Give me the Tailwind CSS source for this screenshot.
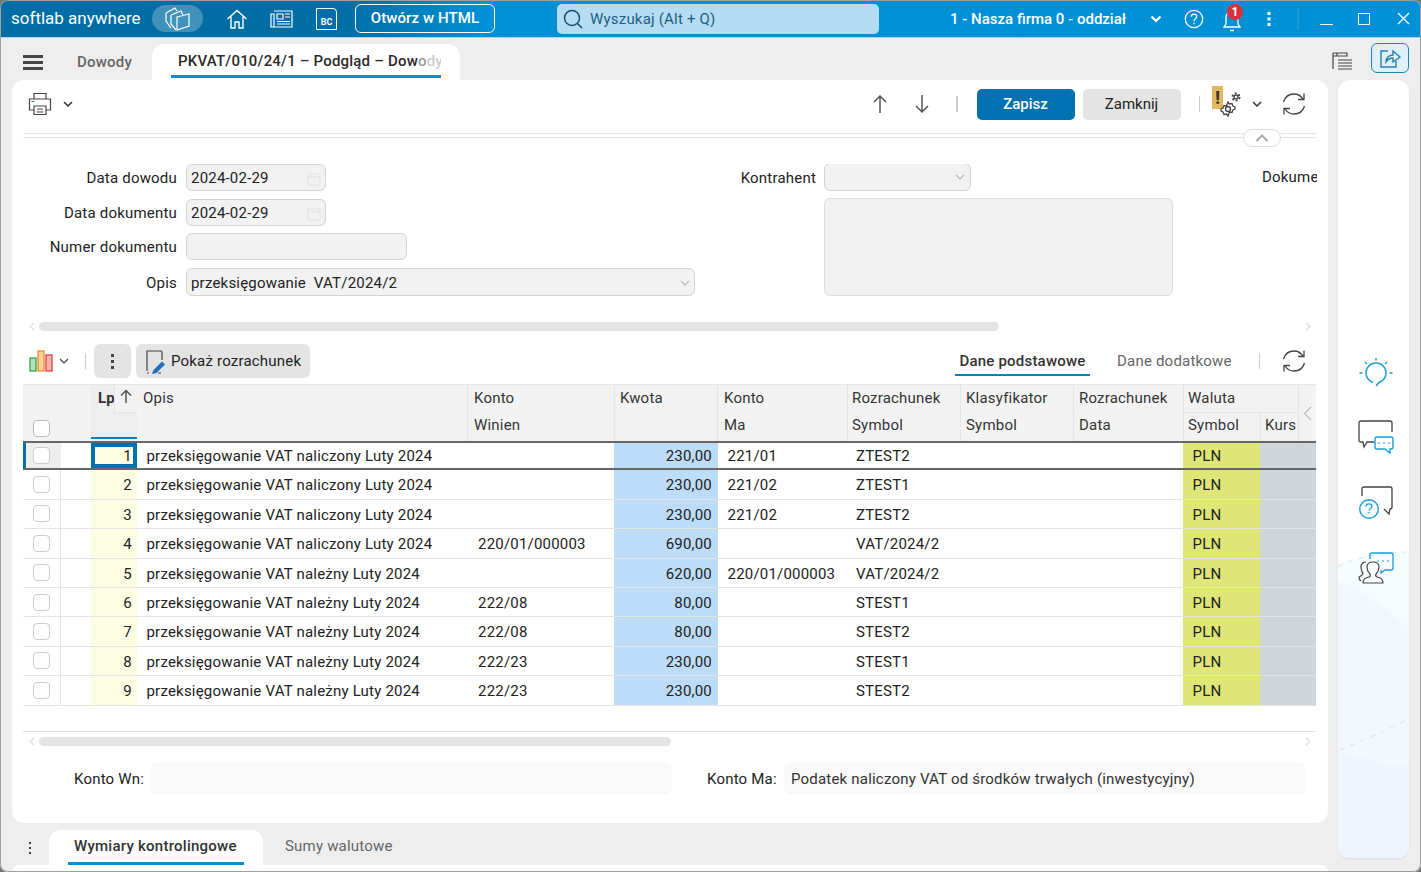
<!DOCTYPE html>
<html lang="pl">
<head>
<meta charset="UTF-8">
<title>PKVAT/010/24/1 - Podgląd - Dowody</title>
<script src="https://cdn.jsdelivr.net/npm/@tailwindcss/browser@4"></script>
</head>
<body class="w-[1421px] h-[872px] overflow-hidden bg-[#777] font-['Roboto',sans-serif] text-[15px] text-[#222]">
<div class="relative w-[1421px] h-[872px] overflow-hidden rounded-[8px] bg-[#eeeeee]">

<!-- title bar -->
<header class="h-[38px] flex items-center text-white bg-gradient-to-r from-[#006ea4] from-[24%] to-[#0090d6] to-[34%] border-b border-[#a9d3ea]">
  <span class="ml-[11px] w-[141px] pt-[1px] text-[17px] whitespace-nowrap">softlab anywhere</span>
  <div class="w-[51px] h-[27px] rounded-full bg-white/25 flex items-center justify-center">
    <svg width="25" height="25" viewBox="0 0 25 25" fill="none" stroke="#fff" stroke-width="1.200"><path d="M12 11L24 8V20L12 24Z"/><path d="M6 9L16 5L18 9M6 9V18L11 24"/><path d="M1 7L10 2L12 5M1 7V15L6 22"/></svg>
  </div>
  <svg class="ml-[23px]" width="22" height="22" viewBox="0 0 22 22" fill="none" stroke="#fff" stroke-width="1.400"><path d="M1.500 11L11 2.500 20.500 11M5 8.500V20h4v-6h4v6h4V8.500"/></svg>
  <svg class="ml-[21px]" width="24" height="20" viewBox="0 0 24 20" fill="none" stroke="#fff" stroke-width="1.200"><path d="M5 2h18v16H2V5h3v13M8 5h6v5H8zM16 5h5M16 8h5M8 12.500h13M8 15h13"/></svg>
  <div class="ml-[23px] w-[21px] h-[22px] border border-white rounded-tr-[4px] rounded-bl-[1px] flex items-end justify-center text-[9px] font-bold leading-[13px]">BC</div>
  <button class="ml-[18px] w-[140px] h-[29px] border border-white rounded-[6px] text-[15px] tracking-[0.1px] font-medium">Otwórz w HTML</button>
  <div class="ml-[62px] w-[322px] h-[30px] pt-[1px] rounded-[5px] bg-[#b5dcf2] flex items-center text-[#1d5f86] text-[15px] tracking-[0.2px]">
    <svg class="ml-[5px] mr-[6px]" width="22" height="22" viewBox="0 0 22 22" fill="none" stroke="#174f70" stroke-width="1.500"><circle cx="10" cy="10" r="7.500"/><path d="M15.500 15.500L20 20"/></svg>
    Wyszukaj (Alt + Q)
  </div>
  <span class="ml-[71px] w-[200px] pt-[1px] whitespace-nowrap text-[15px] font-medium">1 - Nasza firma 0 - oddział</span>
  <svg width="12" height="8" viewBox="0 0 12 8" fill="none" stroke="#fff" stroke-width="2.200"><path d="M1.500 1.500L6 6l4.500-4.500"/></svg>
  <svg class="ml-[22px]" width="20" height="20" viewBox="0 0 20 20" fill="none" stroke="#fff" stroke-width="1.300"><circle cx="10" cy="10" r="8.700"/><path d="M7.300 7.800c0-3.400 5.500-3.400 5.500-.2 0 2.200-2.800 2.200-2.800 4.600M10 13.800v1.400"/></svg>
  <div class="relative ml-[18px] w-[20px] h-[26px]">
    <svg width="20" height="26" viewBox="0 0 20 26" fill="none" stroke="#fff" stroke-width="1.300"><path d="M2 21h16l-2-3V12c0-4-2.500-6.500-6-6.500S4 8 4 12v6zM8 24.500h4"/></svg>
    <span class="absolute -top-[2px] left-[5px] w-[16px] h-[16px] rounded-full bg-[#d8313b] text-[12px] font-bold leading-[16px] text-center">1</span>
  </div>
  <svg class="ml-[25px]" width="4" height="14" viewBox="0 0 4 14" fill="#fff"><rect x="0.500" width="3" height="3"/><rect x="0.500" y="5.500" width="3" height="3"/><rect x="0.500" y="11" width="3" height="3"/></svg>
  <div class="ml-[26px] w-[2px] h-[22px] bg-white/10"></div>
  <div class="ml-[21px] w-[13px] h-[1.500px] bg-white mt-[12px]"></div>
  <div class="ml-[25px] w-[12px] h-[12px] border-[1.500px] border-white"></div>
  <svg class="ml-[27px]" width="13" height="13" viewBox="0 0 13 13" stroke="#fff" stroke-width="1.400"><path d="M1 1l11 11M12 1L1 12"/></svg>
</header>

<!-- tab strip -->
<div class="h-[42px] flex items-end">
  <div class="w-[152px] h-[36px] flex items-center shrink-0">
    <div class="ml-[23px] w-[20px] flex flex-col gap-[3px]"><i class="block h-[3px] bg-[#444]"></i><i class="block h-[3px] bg-[#444]"></i><i class="block h-[3px] bg-[#444]"></i></div>
    <span class="ml-[34px] font-medium text-[#666] text-[15px] tracking-[0.2px]">Dowody</span>
  </div>
  <div class="w-[308px] h-[36px] bg-white rounded-t-[12px] px-[19px] flex flex-col">
    <div class="h-[31px] pl-[7px] leading-[35px] text-[15px] tracking-[0.2px] font-medium text-[#2a2a2a] whitespace-nowrap overflow-hidden">PKVAT/010/24/1 – Podgląd – Dow<span class="text-[#999]">o</span><span class="text-[#ccc]">dy</span></div>
    <div class="h-[3px] bg-[#0a8fd6]"></div>
  </div>
  <div class="ml-[870px] mb-[9px] w-[24px] flex justify-center">
    <svg width="22" height="20" viewBox="0 0 22 20" fill="none" stroke="#444"><path d="M2 18V2M2 2h4v3H2M6 2h10v3H6M7 9h14M7 12h14M7 15h14M7 18h14" stroke-width="1.200"/></svg>
  </div>
  <div class="ml-[17px] mb-[7px] w-[38px] h-[30px] rounded-[6px] border border-[#1d85b8] bg-[#dff0f9] flex items-center justify-center">
    <svg width="22" height="22" viewBox="0 0 22 22" fill="none" stroke="#2a7fb0" stroke-width="1.400"><path d="M9 4H2v16h15v-6M7 15c0-5 4-7 7-7V4l7 6-7 5v-4c-3 0-5 1-7 4z"/></svg>
  </div>
</div>

<div class="flex h-[792px]">
  <div class="ml-[12px] w-[1316px] shrink-0 flex flex-col">

    <!-- main card -->
    <main class="h-[743px] shrink-0 bg-white rounded-[12px] flex flex-col">

      <!-- toolbar -->
      <div class="h-[53px] shrink-0 flex items-center pb-[5px]">
        <svg class="ml-[16px]" width="24" height="24" viewBox="0 0 24 24" fill="none" stroke="#444" stroke-width="1.200"><path d="M6 7V1.500h12V7M6 18H1.500V7h21v11H18M6 14h12v8.500H6zM9 17h6M9 20h6"/><path d="M3.500 9.500h3" stroke="#1d85c8"/></svg>
        <svg class="ml-[11px]" width="10" height="6" viewBox="0 0 10 6" fill="none" stroke="#333" stroke-width="1.500"><path d="M1 1l4 4 4-4"/></svg>
        <svg class="ml-[799px]" width="16" height="20" viewBox="0 0 16 20" fill="none" stroke="#555" stroke-width="1.500"><path d="M8 19V2M2 8l6-6 6 6"/></svg>
        <svg class="ml-[26px]" width="16" height="20" viewBox="0 0 16 20" fill="none" stroke="#555" stroke-width="1.500"><path d="M8 1v17M2 12l6 6 6-6"/></svg>
        <div class="ml-[26px] w-[1.500px] h-[16px] bg-[#ccc]"></div>
        <button class="ml-[19px] w-[98px] h-[31px] pt-[1px] rounded-[5px] bg-[#0071b0] text-white font-medium text-[15px]">Zapisz</button>
        <button class="ml-[8px] w-[98px] h-[31px] pt-[1px] rounded-[5px] bg-[#e4e4e4] text-[15px] text-[#222]">Zamknij</button>
        <div class="ml-[18px] w-[1.500px] h-[16px] bg-[#ccc]"></div>
        <div class="relative ml-[12px] w-[30px] h-[30px]">
          <div class="absolute left-0 top-[-3px] w-[11px] h-[23px] bg-[#e2b95c] text-[#333] font-bold text-[19px] leading-[23px] text-center">!</div>
          <svg class="absolute left-[8px] top-[2px]" width="22" height="28" viewBox="0 0 22 28" fill="none" stroke="#444" stroke-width="1.300"><circle cx="8" cy="18" r="2.500"/><path d="M8 11l1.500 2 2.500-.5 1 2.500 2 1v2l-2 1-1 2.500-2.500-.5L8 25l-1.500-2-2.500.5-1-2.500-2-1v-2l2-1 1-2.500 2.500.5z"/><circle cx="16" cy="6" r="2"/><circle cx="16" cy="6" r="3.600" stroke-width="1.800" stroke-dasharray="2 1.800"/></svg>
        </div>
        <svg class="ml-[10px]" width="10" height="6" viewBox="0 0 10 6" fill="none" stroke="#333" stroke-width="1.500"><path d="M1 1l4 4 4-4"/></svg>
        <svg class="ml-[20px]" width="24" height="24" viewBox="0 0 24 24" fill="none" stroke="#444" stroke-width="1.300"><path d="M1.500 10C3 5 7 2 12 2c4 0 7 2 9 5M22 1.500V7.500h-6M22.500 14c-1.500 5-5.500 8-10.500 8-4 0-7-2-9-5M2 22.500V16.500h6"/></svg>
      </div>

      <!-- divider with collapse button -->
      <div class="relative h-[31px] shrink-0">
        <div class="mx-[11px] h-[5px] border-y border-[#e4e4e4]"></div>
        <div class="absolute left-[1231px] top-[-4px] w-[38px] h-[18px] rounded-full border border-[#ddd] bg-white flex items-center justify-center">
          <svg width="14" height="8" viewBox="0 0 14 8" fill="none" stroke="#aaa" stroke-width="2"><path d="M1.500 7L7 1.500 12.500 7"/></svg>
        </div>
      </div>

      <!-- form -->
      <div class="h-[133px] shrink-0 flex overflow-hidden w-[1305px] text-[15px] tracking-[0.2px]">
        <div class="w-[683px] shrink-0 flex flex-col">
          <div class="h-[27px] flex items-center">
            <label class="w-[165px] pt-[2px] text-right text-[#222]">Data dowodu</label>
            <div class="ml-[9px] w-[140px] h-[27px] pt-[2px] rounded-[6px] border border-[#d2d2d2] bg-[#f2f2f2] flex items-center justify-between px-[4px]"><span>2024-02-29</span>
              <svg width="14" height="14" viewBox="0 0 14 14" fill="none" stroke="#e2e2e2"><rect x="1" y="2" width="12" height="11" rx="1"/><path d="M1 5h12"/></svg>
            </div>
          </div>
          <div class="mt-[8px] h-[27px] flex items-center">
            <label class="w-[165px] pt-[2px] text-right text-[#222]">Data dokumentu</label>
            <div class="ml-[9px] w-[140px] h-[27px] pt-[2px] rounded-[6px] border border-[#d2d2d2] bg-[#f2f2f2] flex items-center justify-between px-[4px]"><span>2024-02-29</span>
              <svg width="14" height="14" viewBox="0 0 14 14" fill="none" stroke="#e2e2e2"><rect x="1" y="2" width="12" height="11" rx="1"/><path d="M1 5h12"/></svg>
            </div>
          </div>
          <div class="mt-[7px] h-[27px] flex items-center">
            <label class="w-[165px] pt-[2px] text-right text-[#222]">Numer dokumentu</label>
            <div class="ml-[9px] w-[221px] h-[27px] rounded-[6px] border border-[#d2d2d2] bg-[#f2f2f2]"></div>
          </div>
          <div class="mt-[8px] h-[28px] flex items-center">
            <label class="w-[165px] pt-[2px] text-right text-[#222]">Opis</label>
            <div class="ml-[9px] w-[509px] h-[28px] pt-[2px] rounded-[6px] border border-[#d2d2d2] bg-[#f2f2f2] flex items-center justify-between px-[4px]"><span class="whitespace-pre">przeksięgowanie  VAT/2024/2</span>
              <svg width="10" height="6" viewBox="0 0 10 6" fill="none" stroke="#bbb" stroke-width="1.300"><path d="M1 1l4 4 4-4"/></svg>
            </div>
          </div>
        </div>
        <div class="w-[477px] shrink-0 flex flex-col">
          <div class="h-[28px] -mt-[1px] flex items-center">
            <label class="w-[121px] pt-[2px] text-right text-[#222]">Kontrahent</label>
            <div class="ml-[8px] w-[147px] h-[28px] rounded-[6px] border border-[#d2d2d2] bg-[#f2f2f2] flex items-center justify-end px-[5px]">
              <svg width="10" height="6" viewBox="0 0 10 6" fill="none" stroke="#bbb" stroke-width="1.300"><path d="M1 1l4 4 4-4"/></svg>
            </div>
          </div>
          <div class="mt-[7px] ml-[129px] w-[349px] h-[98px] rounded-[6px] border border-[#dcdcdc] bg-[#f2f2f2]"></div>
        </div>
        <div class="ml-[90px] h-[27px] leading-[27px] text-[#222] whitespace-nowrap">Dokumenty</div>
      </div>

      <!-- form scrollbar -->
      <div class="h-[9px] mt-[25px] shrink-0 flex items-center">
        <svg class="ml-[17px]" width="6" height="9" viewBox="0 0 6 9" fill="none" stroke="#ddd" stroke-width="1.200"><path d="M5 1L1 4.500 5 8"/></svg>
        <div class="ml-[4px] w-[960px] h-[9px] rounded-full bg-[#e4e4e4]"></div>
        <svg class="ml-[306px]" width="6" height="9" viewBox="0 0 6 9" fill="none" stroke="#ddd" stroke-width="1.200"><path d="M1 1l4 3.500L1 8"/></svg>
      </div>

      <!-- grid toolbar -->
      <div class="h-[34px] mt-[13px] shrink-0 flex items-center relative">
        <svg class="ml-[17px]" width="25" height="22" viewBox="0 0 25 22" fill="none" stroke-width="1.300"><rect x="1" y="8" width="6" height="13" fill="#b5dfb5" stroke="#2ea84a"/><rect x="9" y="1" width="6" height="20" fill="#f9d39a" stroke="#ee8a2c"/><rect x="17" y="5" width="6" height="16" fill="#f7b5b5" stroke="#e33f3f"/></svg>
        <svg class="ml-[5px]" width="10" height="6" viewBox="0 0 10 6" fill="none" stroke="#444" stroke-width="1.200"><path d="M1 1l4 4 4-4"/></svg>
        <div class="ml-[16px] w-[1px] h-[16px] bg-[#ccc]"></div>
        <div class="ml-[8px] w-[37px] h-[34px] rounded-[6px] bg-[#e4e4e4] flex flex-col items-center justify-center gap-[3px]"><i class="block w-[3px] h-[3px] bg-[#444]"></i><i class="block w-[3px] h-[3px] bg-[#444]"></i><i class="block w-[3px] h-[3px] bg-[#444]"></i></div>
        <div class="ml-[5px] w-[174px] h-[34px] pt-[1px] rounded-[6px] bg-[#e4e4e4] flex items-center whitespace-nowrap text-[15px] tracking-[0.2px]">
          <svg class="ml-[9px] mr-[4px]" width="22" height="26" viewBox="0 0 22 26" fill="none"><path d="M2 22V2h14l1 1v8M2 24h2M13 24h3" stroke="#444" stroke-width="1.200"/><path d="M7 25l1.500-4L17 12.500l3 3L11.500 24z" fill="#2170b8"/></svg>
          Pokaż rozrachunek
        </div>
        <div class="ml-[645px] w-[135px] h-[31px] border-b-2 border-[#0a7fc0] text-center leading-[32px] font-medium text-[15px] tracking-[0.2px] self-start mt-[1px] text-[#333]">Dane podstawowe</div>
        <span class="ml-[27px] pt-[1px] text-[15px] tracking-[0.2px] text-[#666]">Dane dodatkowe</span>
        <div class="ml-[27px] w-[1px] h-[16px] bg-[#ccc]"></div>
        <svg class="ml-[22px]" width="24" height="24" viewBox="0 0 24 24" fill="none" stroke="#444" stroke-width="1.300"><path d="M1.500 10C3 5 7 2 12 2c4 0 7 2 9 5M22 1.500V7.500h-6M22.500 14c-1.500 5-5.500 8-10.500 8-4 0-7-2-9-5M2 22.500V16.500h6"/></svg>
      </div>

      <!-- grid -->
      <div class="mt-[6px] ml-[11px] w-[1293px] shrink-0 text-[15px] tracking-[0.2px]">
        <div class="relative h-[57px] bg-[#f3f3f3] border-t border-[#e6e6e6] grid grid-cols-[38px_30px_46px_331px_146px_104px_129px_113px_113px_110px_77px_56px] grid-rows-[28px_28px] text-[#333]">
          <div class="row-span-2 col-span-2 flex items-end pl-[10px] pb-[4px]"><span class="block w-[17px] h-[17px] rounded-[4px] border border-[#bbb] bg-white"></span></div>
          <div class="row-span-2 mb-[2px] bg-[#eeeeee] border-b-2 border-[#0a7fc0] font-bold flex">
            <span class="w-[23px] pl-[7px] pt-[2px]">Lp</span>
            <div class="w-[23px] h-[28px] bg-[#f3f3f3] border-l border-b border-[#e6e6e6] flex justify-center pt-[4px]">
              <svg width="12" height="14" viewBox="0 0 12 14" fill="none" stroke="#555" stroke-width="1.500"><path d="M6 14V1.500M1 6.500l5-5 5 5"/></svg>
            </div>
          </div>
          <div class="row-span-2 pl-[6px] pt-[2px] border-r border-[#e6e6e6]">Opis</div>
          <div class="pl-[6px] pt-[2px]">Konto</div>
          <div class="row-span-2 pl-[5px] pt-[2px] border-x border-[#e6e6e6]">Kwota</div>
          <div class="pl-[6px] pt-[2px]">Konto</div>
          <div class="pl-[4px] pt-[2px] border-l border-[#e6e6e6]">Rozrachunek</div>
          <div class="pl-[5px] pt-[2px] border-l border-[#e6e6e6]">Klasyfikator</div>
          <div class="pl-[5px] pt-[2px] border-l border-[#e6e6e6]">Rozrachunek</div>
          <div class="col-span-2 pl-[4px] pt-[2px] border-l border-b border-[#e6e6e6]">Waluta</div>
          <div class="col-start-5 pl-[6px] pt-[1px]">Winien</div>
          <div class="col-start-7 pl-[6px] pt-[1px]">Ma</div>
          <div class="pl-[4px] pt-[1px] border-l border-[#e6e6e6]">Symbol</div>
          <div class="pl-[5px] pt-[1px] border-l border-[#e6e6e6]">Symbol</div>
          <div class="pl-[5px] pt-[1px] border-l border-[#e6e6e6]">Data</div>
          <div class="pl-[4px] pt-[1px] border-l border-[#e6e6e6]">Symbol</div>
          <div class="pl-[4px] pt-[1px] border-l border-[#e6e6e6] whitespace-nowrap">Kurs</div>
          <div class="absolute right-0 top-0 w-[18px] h-[56px] bg-[#f3f3f3] border-l border-[#e6e6e6] flex items-center justify-center">
            <svg width="9" height="15" viewBox="0 0 9 15" fill="none" stroke="#bbb" stroke-width="1.300"><path d="M8 1L1.500 7.500 8 14"/></svg>
          </div>
        </div>
        <div id="rows"></div>
      </div>

      <!-- grid bottom -->
      <div class="ml-[11px] w-[1293px] mt-[25px] h-[1px] bg-[#e2e2e2] shrink-0"></div>
      <div class="h-[9px] mt-[5px] shrink-0 flex items-center">
        <svg class="ml-[17px]" width="6" height="9" viewBox="0 0 6 9" fill="none" stroke="#ddd" stroke-width="1.200"><path d="M5 1L1 4.500 5 8"/></svg>
        <div class="ml-[4px] w-[632px] h-[9px] rounded-full bg-[#e4e4e4]"></div>
        <svg class="ml-[634px]" width="6" height="9" viewBox="0 0 6 9" fill="none" stroke="#ddd" stroke-width="1.200"><path d="M1 1l4 3.500L1 8"/></svg>
      </div>

      <!-- account names -->
      <div class="mt-[16px] h-[33px] shrink-0 flex items-center text-[15px] tracking-[0.2px]">
        <span class="ml-[62px] pt-[2px] w-[70px] whitespace-nowrap text-[#222]">Konto Wn:</span>
        <div class="ml-[7px] w-[521px] h-[33px] rounded-[6px] bg-[#f9f9f9]"></div>
        <span class="ml-[35px] pt-[2px] w-[70px] whitespace-nowrap text-[#222]">Konto Ma:</span>
        <div class="ml-[7px] w-[521px] h-[33px] pt-[1px] rounded-[6px] bg-[#f9f9f9] leading-[33px] pl-[7px] text-[#333] whitespace-nowrap">Podatek naliczony VAT od środków trwałych (inwestycyjny)</div>
      </div>
    </main>

    <!-- bottom tabs -->
    <div class="h-[35px] mt-[7px] flex items-end shrink-0">
      <div class="w-[37px] h-[35px] flex flex-col items-center justify-center gap-[3px] pr-[2px]"><i class="block w-[2px] h-[2px] bg-[#444]"></i><i class="block w-[2px] h-[2px] bg-[#444]"></i><i class="block w-[2px] h-[2px] bg-[#444]"></i></div>
      <div class="w-[214px] h-[35px] bg-white rounded-t-[12px] px-[19px] flex flex-col">
        <div class="h-[32px] pl-[6px] leading-[32px] font-medium text-[#333] text-[15px] tracking-[0.25px] whitespace-nowrap">Wymiary kontrolingowe</div>
        <div class="h-[3px] bg-[#0a8fd6]"></div>
      </div>
      <span class="ml-[22px] h-[35px] leading-[32px] text-[15px] tracking-[0.2px] text-[#666]">Sumy walutowe</span>
    </div>
    <div class="h-[7px] bg-white rounded-t-[10px] shrink-0"></div>
  </div>

  <!-- side panel -->
  <aside class="relative ml-[10px] w-[71px] h-[778px] rounded-[12px] overflow-hidden bg-white flex flex-col items-center shadow-[0_1px_2px_rgba(0,0,0,0.08)]">
    <svg class="absolute left-0 top-0" width="71" height="778" viewBox="0 0 71 778">
      <path d="M0 486C20 476 50 472 71 472V778H0Z" fill="#f6fbfe"/>
      <path d="M0 500C25 510 50 530 71 550V778H0Z" fill="#f2f8fd"/>
      <path d="M0 670C25 680 50 685 71 685V778H0Z" fill="#eef5fc"/>
      <path d="M0 486C20 476 50 472 71 472M2 670C20 662 50 650 68 640" fill="none" stroke="#cfe6f5" stroke-dasharray="5 6"/>
    </svg>
    <svg class="relative mt-[277px] ml-[5px]" width="34" height="30" viewBox="0 0 34 30" fill="none" stroke="#1a9ddd" stroke-width="1.500"><path d="M14 25.500A10 10 0 1 1 20 25.500L17 29"/><path d="M17 1v2.500M6 5l2 2M28 5l-2 2M.5 16h3M30.500 16h3"/></svg>
    <svg class="relative mt-[33px] ml-[5px]" width="36" height="34" viewBox="0 0 36 34" fill="none"><path d="M16 22H9L6 27 5 22H3Q1 22 1 20V3Q1 1 3 1H32Q34 1 34 3V12" stroke="#444" stroke-width="1.300"/><path d="M19 17h14q2 0 2 2v8q0 2-2 2h-1v4l-5-4h-8q-2 0-2-2v-8q0-2 2-2z" fill="#fff" stroke="#1a9ddd" stroke-width="1.400"/><path d="M20 23h2M25 23h2M30 23h2" stroke="#1a9ddd"/></svg>
    <svg class="relative mt-[31px] ml-[5px]" width="36" height="34" viewBox="0 0 36 34" fill="none"><path d="M4 11V4q0-2 2-2h26q2 0 2 2v18q0 2-2 2l-1 5-5-5" stroke="#444" stroke-width="1.300"/><circle cx="11" cy="24" r="9.300" fill="#fff" stroke="#1a9ddd" stroke-width="1.400"/><path d="M8 21.500c0-3.500 6-3.500 6 0 0 2-3 2-3 4M11 27v1.500" stroke="#1a9ddd" stroke-width="1.300"/></svg>
    <svg class="relative mt-[32px] ml-[5px]" width="36" height="34" viewBox="0 0 36 34" fill="none"><path d="M12 8V4q0-2 2-2h19q2 0 2 2v13q0 2-2 2h-6l-4 3v-3" stroke="#1a9ddd" stroke-width="1.300"/><path d="M19 10h2M24 10h2M29 10h2" stroke="#1a9ddd"/><path d="M8 11q-4 0-5 4 0 5 2 7 0 2-4 4 0 3 2 4" stroke="#444" stroke-width="1.200"/><path d="M5 32q0-5 6-6 2-1 1-3-3-3-3-7 0-5 6-5t6 5q0 4-3 7-1 2 1 3 6 1 6 6z" fill="#fff" stroke="#444" stroke-width="1.200"/></svg>
  </aside>
</div>

<!-- window frame -->
<div class="absolute inset-0 rounded-[8px] border border-[#a0a0a0] pointer-events-none"></div>
</div>

<script>
  // wiersze dowodu
  const rows = [
    ["1", "przeksięgowanie VAT naliczony Luty 2024", "", "230,00", "221/01", "ZTEST2"],
    ["2", "przeksięgowanie VAT naliczony Luty 2024", "", "230,00", "221/02", "ZTEST1"],
    ["3", "przeksięgowanie VAT naliczony Luty 2024", "", "230,00", "221/02", "ZTEST2"],
    ["4", "przeksięgowanie VAT naliczony Luty 2024", "220/01/000003", "690,00", "", "VAT/2024/2"],
    ["5", "przeksięgowanie VAT należny Luty 2024", "", "620,00", "220/01/000003", "VAT/2024/2"],
    ["6", "przeksięgowanie VAT należny Luty 2024", "222/08", "80,00", "", "STEST1"],
    ["7", "przeksięgowanie VAT należny Luty 2024", "222/08", "80,00", "", "STEST2"],
    ["8", "przeksięgowanie VAT należny Luty 2024", "222/23", "230,00", "", "STEST1"],
    ["9", "przeksięgowanie VAT należny Luty 2024", "222/23", "230,00", "", "STEST2"]
  ];
  document.getElementById("rows").innerHTML = rows.map((r, i) => {
    const first = i === 0;
    const rowCls = first
      ? "h-[29.4px] border-y-[2.5px] border-[#666] grid grid-cols-[38px_30px_46px_331px_146px_104px_129px_113px_113px_110px_77px_56px] items-stretch leading-[22px]"
      : "h-[29.4px] border-b border-[#e4e4e4] grid grid-cols-[38px_30px_46px_331px_146px_104px_129px_113px_113px_110px_77px_56px] items-stretch leading-[26px]";
    const lpCls = first
      ? "bg-[#fdfde3] border-[4px] border-[#0071b0] flex items-center justify-end pr-[1px] leading-[16px]"
      : "bg-[#fdfde3] text-right pr-[5px] pt-[2px]";
    const chkCls = first
      ? "pl-[7px] flex items-center bg-[#eeeeee] border-l-[3px] border-[#0071b0]"
      : "pl-[10px] flex items-center border-r border-[#e4e4e4]";
    return `<div class="${rowCls}">
      <div class="${chkCls}"><span class="block w-[17px] h-[17px] rounded-[4px] border border-[#ccc] bg-white"></span></div>
      <div></div>
      <div class="${lpCls}">${r[0]}</div>
      <div class="pl-[9.5px] pt-[2px] whitespace-nowrap">${r[1]}</div>
      <div class="pl-[10px] pt-[2px]">${r[2]}</div>
      <div class="bg-[#bcdcf8] text-right pr-[6px] pt-[2px]">${r[3]}</div>
      <div class="pl-[9.5px] pt-[2px]">${r[4]}</div>
      <div class="pl-[9px] pt-[2px]">${r[5]}</div>
      <div></div>
      <div></div>
      <div class="bg-[#dfe678] pl-[9.5px] pt-[2px]">PLN</div>
      <div class="bg-[#d0d7dc]"></div>
    </div>`;
  }).join("");
</script>
</body>
</html>
